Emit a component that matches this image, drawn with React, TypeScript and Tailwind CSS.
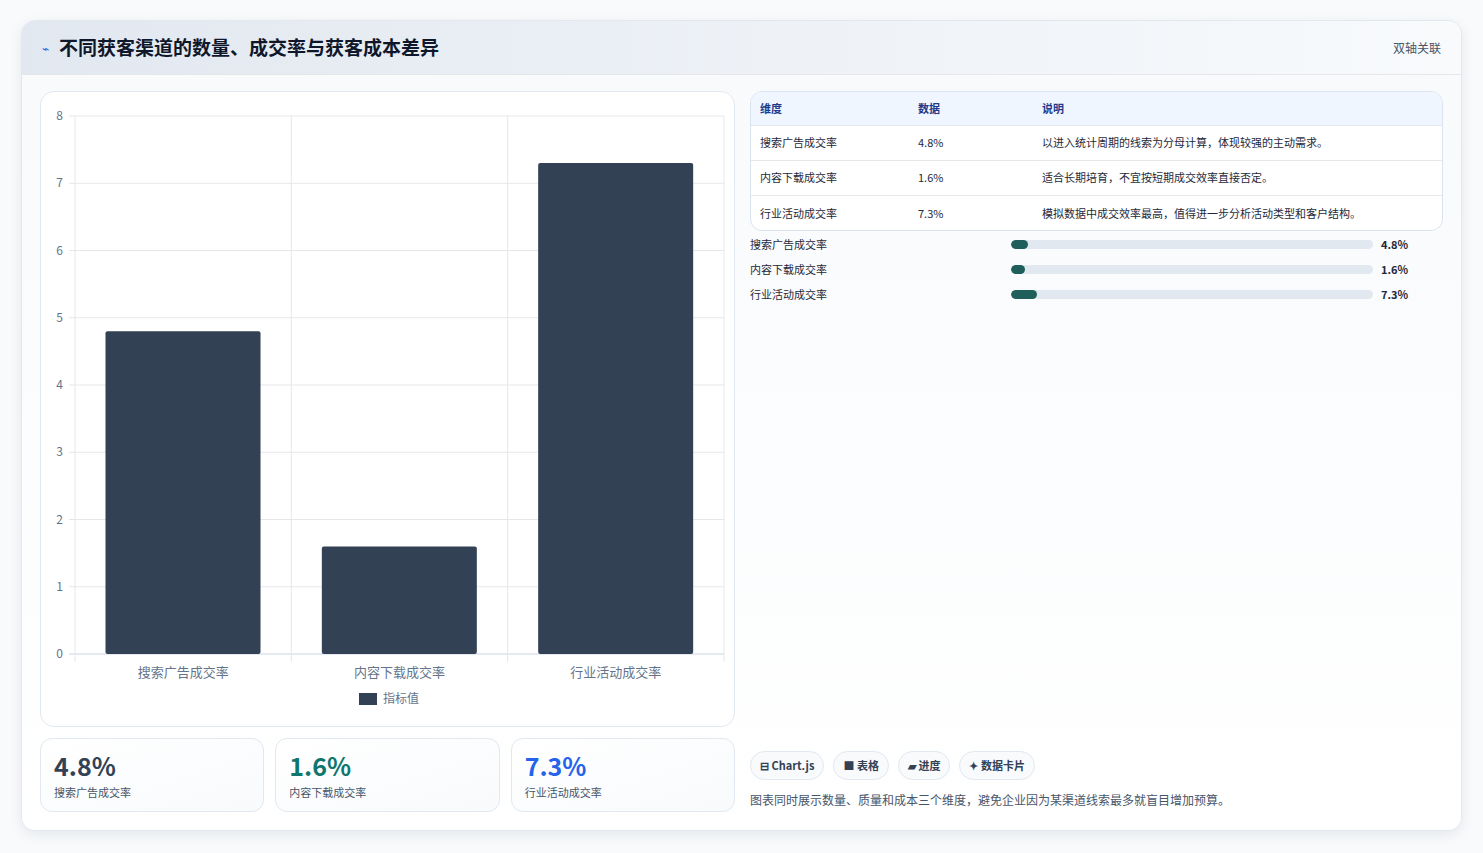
import React from "react";

const F = { fontFamily: '"Noto Sans CJK SC","Noto Sans",sans-serif' };
const rows = [
  ["搜索广告成交率", "4.8%", "以进入统计周期的线索为分母计算，体现较强的主动需求。", 4.8],
  ["内容下载成交率", "1.6%", "适合长期培育，不宜按短期成交效率直接否定。", 1.6],
  ["行业活动成交率", "7.3%", "模拟数据中成交效率最高，值得进一步分析活动类型和客户结构。", 7.3],
] as const;

function Chart() {
  const L = 34, R = 683, T = 24, B = 562;
  const h = (B - T) / 8;
  const cw = (R - L) / 3;
  return (
    <svg width="695" height="636" className="block">
      {Array.from({ length: 9 }).map((_, i) => (
        <g key={i}>
          <line x1={L - 6} x2={R} y1={B - i * h} y2={B - i * h} stroke={i === 0 ? "#cbd5e1" : "#e5e7eb"} />
          <text x={L - 12} y={B - i * h + 4} fontSize="12" fill="#64748b" textAnchor="end" style={F}>{i}</text>
        </g>
      ))}
      {[0, 1, 2, 3].map((i) => (
        <line key={i} x1={L + i * cw} x2={L + i * cw} y1={T} y2={B + 8} stroke="#e5e7eb" />
      ))}
      {rows.map((r, i) => {
        const v = r[3];
        const x = L + i * cw + 30.5;
        return (
          <g key={i}>
            <rect x={x} y={B - v * h} width={155} height={v * h} rx="2" fill="#334155" />
            <text x={L + i * cw + cw / 2} y={B + 23} fontSize="13" fill="#64748b" textAnchor="middle" style={F}>{r[0]}</text>
          </g>
        );
      })}
      <rect x="318" y="601" width="18" height="12" fill="#334155" />
      <text x="342" y="611" fontSize="12" fill="#64748b" style={F}>指标值</text>
    </svg>
  );
}

export default function App() {
  return (
    <div className="w-[1483px] h-[853px] bg-[#f8fafc] pt-[20px] pl-[21px]" style={F}>
      <div className="w-[1441px] h-[811px] rounded-[14px] bg-white shadow-[0_4px_14px_rgba(15,23,42,0.08)] border border-[#e2e8f0] overflow-hidden flex flex-col">
        <div className="h-[55px] flex items-center justify-between px-[20px] bg-gradient-to-r from-[#e2e8f0] to-[#f8fafc] border-b border-[#e5e7eb]">
          <div className="flex items-center gap-[10px]">
            <span className="text-[#2563eb] text-[12px]">⌁</span>
            <span className="text-[19px] font-bold text-[#0f172a]">不同获客渠道的数量、成交率与获客成本差异</span>
          </div>
          <span className="text-[12px] text-[#475569]">双轴关联</span>
        </div>
        <div className="flex-1 flex gap-[15px] px-[18px] pt-[16px] pb-[18px] bg-gradient-to-b from-[#f8fafc] to-white">
          <div className="w-[695px] flex flex-col gap-[11px]">
            <div className="h-[636px] rounded-[14px] border border-[#e2e8f0] bg-white overflow-hidden">
              <Chart />
            </div>
            <div className="flex gap-[11px]">
              {[["4.8%", "text-[#334155]", "搜索广告成交率"], ["1.6%", "text-[#0f766e]", "内容下载成交率"], ["7.3%", "text-[#2563eb]", "行业活动成交率"]].map(([v, c, l]) => (
                <div key={l} className="flex-1 h-[74px] rounded-[12px] border border-[#e2e8f0] bg-gradient-to-br from-white to-[#f8fafc] px-[13px] pt-[9px]">
                  <div className={`text-[25px] font-bold leading-[34px] ${c}`}>{v}</div>
                  <div className="text-[11px] text-[#475569] mt-[2px]">{l}</div>
                </div>
              ))}
            </div>
          </div>
          <div className="flex-1 flex flex-col justify-between">
            <div>
              <div className="rounded-[12px] border border-[#dbe3ee] overflow-hidden bg-white">
                <table className="w-full text-[11px] text-[#1e293b] border-collapse">
                  <thead>
                    <tr className="bg-[#eff6ff] h-[33px] text-[#1e3a8a] text-left">
                      <th className="font-semibold pl-[9px] w-[167px]">维度</th>
                      <th className="font-semibold w-[124px]">数据</th>
                      <th className="font-semibold">说明</th>
                    </tr>
                  </thead>
                  <tbody>
                    {rows.map((r) => (
                      <tr key={r[0]} className="h-[35px] border-t border-[#e5e7eb]">
                        <td className="pl-[9px]">{r[0]}</td>
                        <td>{r[1]}</td>
                        <td>{r[2]}</td>
                      </tr>
                    ))}
                  </tbody>
                </table>
              </div>
              <div className="mt-[7px] flex flex-col gap-[12px]">
                {rows.map((r) => (
                  <div key={r[0]} className="flex items-center h-[13px] text-[11px]">
                    <span className="w-[261px] text-[#1e293b]">{r[0]}</span>
                    <div className="w-[362px] h-[9px] rounded-full bg-[#e2e8f0] overflow-hidden">
                      <div className="h-full rounded-full bg-[#1e5f5c]" style={{ width: `${Math.max(r[3], 3.8)}%` }} />
                    </div>
                    <span className="ml-[8px] font-bold text-[#1e293b]">{r[1]}</span>
                  </div>
                ))}
              </div>
            </div>
            <div className="pb-[0px]">
              <div className="flex gap-[9px]">
                {["⊟ Chart.js", "■ 表格", "▰ 进度", "✦ 数据卡片"].map((t) => (
                  <span key={t} className="h-[29px] px-[9px] flex items-center rounded-full border border-[#e2e8f0] bg-[#f8fafc] text-[11px] font-semibold text-[#334155]">{t}</span>
                ))}
              </div>
              <div className="mt-[11px] text-[12px] text-[#475569] mb-[3px]">图表同时展示数量、质量和成本三个维度，避免企业因为某渠道线索最多就盲目增加预算。</div>
            </div>
          </div>
        </div>
      </div>
    </div>
  );
}
